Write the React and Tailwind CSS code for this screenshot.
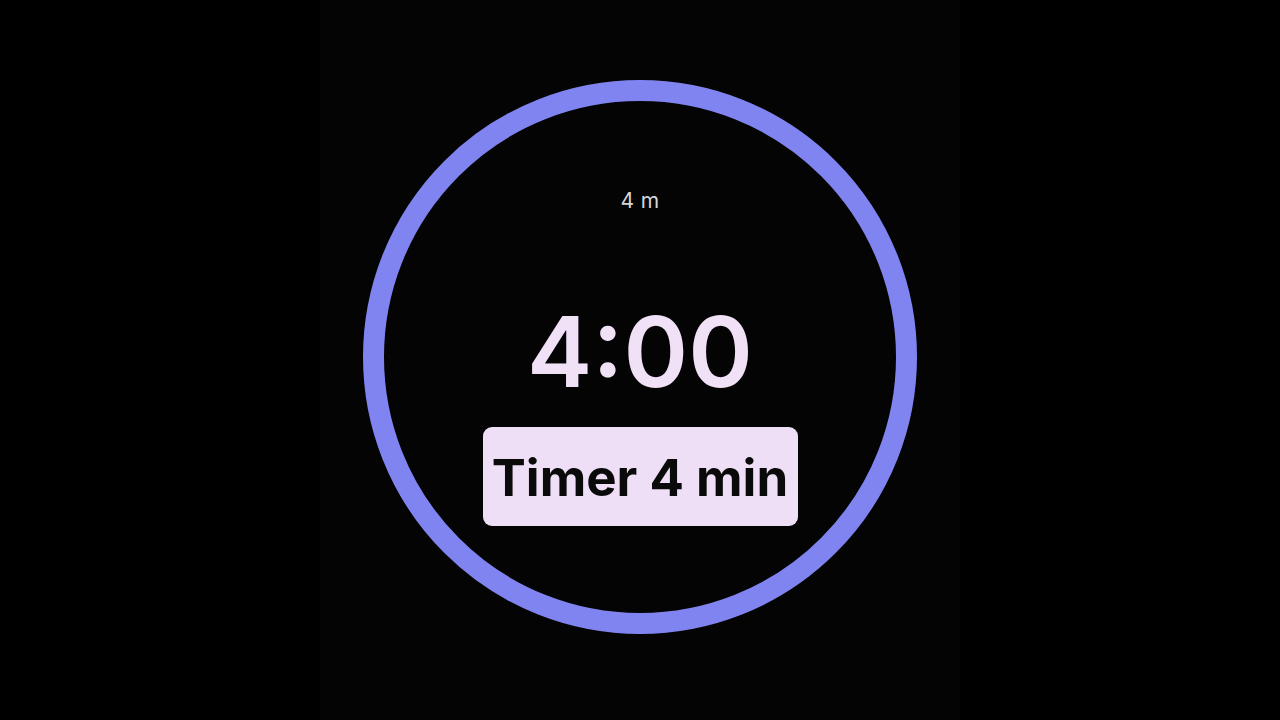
// App.jsx

const App = () => {
  return (
    <div
      className="flex justify-center w-full h-[720px] bg-black"
      style={{ fontFamily: "Inter, 'Noto Sans', sans-serif" }}
    >
      {/* PANEL */}
      <div className="w-[640px] h-full bg-[#040404] flex justify-center pt-[80px]">
        {/* RING */}
        <div className="w-[554px] h-[554px] rounded-full border-[21px] border-[#8084f0] flex flex-col items-center">
          <p className="mt-[88px] text-[21px] leading-[24px] tracking-[0.02em] text-[#d6d6d6]">
            4 m
          </p>

          <p className="mt-[90px] text-[98px] leading-[98px] font-semibold text-[#f0e1f6]">
            4:00
          </p>

          {/* LABEL */}
          <div className="mt-[26px] w-[315px] h-[99px] rounded-[9px] bg-[#efdff6] flex items-center justify-center">
            <span className="text-[51px] leading-none font-bold text-[#0a0a0a] pt-[1px]">
              Timer 4 min
            </span>
          </div>
        </div>
      </div>
    </div>
  );
};

export default App;
